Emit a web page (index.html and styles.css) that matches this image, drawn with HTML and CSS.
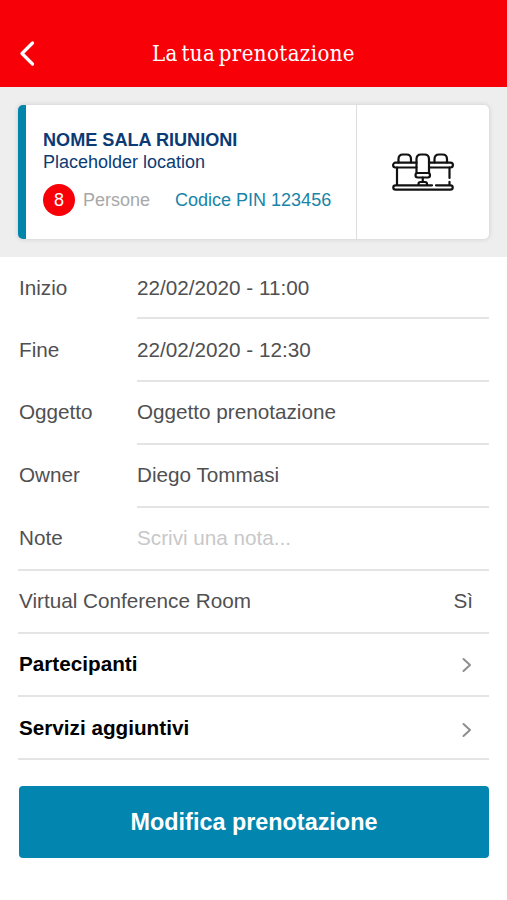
FILE: index.html
```html
<!DOCTYPE html>
<html lang="it">
<head>
  <meta charset="UTF-8">
  <meta name="viewport" content="width=device-width, initial-scale=1.0">
  <title>La tua prenotazione</title>
  <link rel="stylesheet" href="styles.css">
</head>
<body>
  <header class="header">
    <a href="#" class="back" aria-label="Indietro">
      <svg width="17" height="27" viewBox="0 0 17 27"><path d="M14.500 3 L4 13.500 L14.500 24"/></svg>
    </a>
    <h1>La tua prenotazione</h1>
  </header>

  <section class="room">
    <div class="card">
      <div class="card-info">
        <h2>NOME SALA RIUNIONI</h2>
        <p class="location">Placeholder location</p>
        <div class="meta">
          <span class="badge">8</span>
          <span class="people">Persone</span>
          <span class="pin">Codice PIN 123456</span>
        </div>
      </div>
      <div class="card-icon">
        <!-- meeting table with chairs -->
        <svg width="62" height="38" viewBox="0 0 62 38">
          <path d="M6.500 9.500V6Q6.500 1.500 11 1.500H14.500Q19 1.500 19 6V9.500"/>
          <path d="M42.500 9.500V6Q42.500 1.500 47 1.500H50.500Q55 1.500 55 6V9.500"/>
          <path d="M24.500 9.700H3.500a2.400 2.400 0 0 0 0 4.800H24.500M37 9.700H58.500a2.400 2.400 0 0 1 0 4.800H37"/>
          <path d="M24.500 20V6Q24.500 1.500 29 1.500H32.500Q37 1.500 37 6V20"/>
          <rect x="23.500" y="20" width="14.500" height="4.500" rx="2.200"/>
          <path d="M30.750 24.500V29M26.500 32V31Q26.500 29 28.500 29H33Q35 29 35 31V32"/>
          <path d="M5 14.500V32M57.500 14.500V25M57.500 28.800V32"/>
          <path d="M40 32.300H3.500a2.200 2.200 0 0 0 0 4.400H58.500a2.200 2.200 0 0 0 0-4.400H44"/>
        </svg>
      </div>
    </div>
  </section>

  <main class="details">
    <div class="row">
      <span class="label">Inizio</span>
      <span class="value">22/02/2020 - 11:00</span>
    </div>
    <div class="row">
      <span class="label">Fine</span>
      <span class="value">22/02/2020 - 12:30</span>
    </div>
    <div class="row">
      <span class="label">Oggetto</span>
      <span class="value">Oggetto prenotazione</span>
    </div>
    <div class="row">
      <span class="label">Owner</span>
      <span class="value">Diego Tommasi</span>
    </div>
    <div class="row full">
      <span class="label">Note</span>
      <span class="value placeholder">Scrivi una nota...</span>
    </div>
    <div class="row full between">
      <span>Virtual Conference Room</span>
      <span>Sì</span>
    </div>
    <a href="#" class="row full between link">
      <span>Partecipanti</span>
      <svg width="10" height="16" viewBox="0 0 10 16"><path d="M1.500 2 L8 8 L1.500 14"/></svg>
    </a>
    <a href="#" class="row full between link last">
      <span>Servizi aggiuntivi</span>
      <svg width="10" height="16" viewBox="0 0 10 16"><path d="M1.500 2 L8 8 L1.500 14"/></svg>
    </a>
    <button type="button" class="btn">Modifica prenotazione</button>
  </main>
</body>
</html>
```
FILE: styles.css
```css
* {
  box-sizing: border-box;
}
body {
  margin: 0;
  background: #fff;
  color: #505052;
  font-family: "Liberation Sans", Arial, sans-serif;
  font-size: 20.7px;
}
h1, h2, p {
  margin: 0;
}
a {
  color: inherit;
  text-decoration: none;
}
svg {
  display: block;
  fill: none;
  stroke-linecap: round;
  stroke-linejoin: round;
}
.header {
  display: grid;
  grid-template-columns: 60px 1fr 60px;
  align-items: center;
  height: 87px;
  padding-top: 20px;
  background: #f80008;
  color: #fff;
}
.header h1 {
  font-family: "DejaVu Serif Condensed", "DejaVu Serif", serif;
  font-size: 22px;
  font-weight: normal;
  letter-spacing: 0.4px;
  word-spacing: -3px;
  text-align: center;
  white-space: nowrap;
}
.back {
  padding-left: 18px;
}
.back svg {
  stroke: #fff;
  stroke-width: 3.2;
}
.room {
  height: 170px;
  padding: 18px 18px 0;
  background: #eee;
}
.card {
  display: flex;
  height: 134px;
  background: #fff;
  border-left: 8px solid #0285aa;
  border-radius: 5px;
  box-shadow: 0 0 5px rgba(0, 0, 0, 0.15);
}
.card-info {
  flex: 1;
  padding: 24px 0 0 17px;
}
.card-info h2 {
  color: #0b3b74;
  font-size: 18.1px;
  line-height: 22px;
}
.location {
  color: #0b3b74;
  font-size: 18px;
  line-height: 22px;
}
.meta {
  display: flex;
  align-items: center;
  margin-top: 11px;
  font-size: 18px;
}
.badge {
  width: 32px;
  height: 32px;
  border-radius: 50%;
  background: #f80008;
  color: #fff;
  line-height: 32px;
  text-align: center;
}
.people {
  margin-left: 8px;
  color: #a8a8a8;
}
.pin {
  margin-left: 25px;
  color: #1884a8;
}
.card-icon {
  display: flex;
  align-items: center;
  justify-content: center;
  width: 133px;
  border-left: 1px solid #ddd;
}
.card-icon svg {
  stroke: #111;
  stroke-width: 2.2;
}
.details {
  padding: 0 18px;
}
.row {
  display: flex;
  height: 63px;
  line-height: 59px;
}
.row:first-child {
  height: 62px;
  line-height: 62px;
}
.row:nth-child(2) {
  line-height: 61px;
}
.label {
  width: 119px;
  padding-left: 1px;
}
.value {
  flex: 1;
  border-bottom: 2px solid #e4e4e4;
}
.full {
  border-bottom: 2px solid #e4e4e4;
}
.full .value {
  border-bottom: none;
}
.placeholder {
  color: #c8c8c8;
}
.between {
  justify-content: space-between;
  padding: 0 16px 0 1px;
}
.link {
  color: #000;
  font-weight: bold;
}
.link svg {
  margin: 23px 1px 0 0;
  stroke: #8e8e8e;
  stroke-width: 2;
}
.last {
  line-height: 62px;
}
.last svg {
  margin-top: 25px;
}
.btn {
  display: block;
  width: 470px;
  height: 72px;
  margin: 26px 0 0 1px;
  border: none;
  border-radius: 4px;
  background: #0285ae;
  color: #fff;
  font-family: inherit;
  font-size: 23.4px;
  font-weight: bold;
}
```
